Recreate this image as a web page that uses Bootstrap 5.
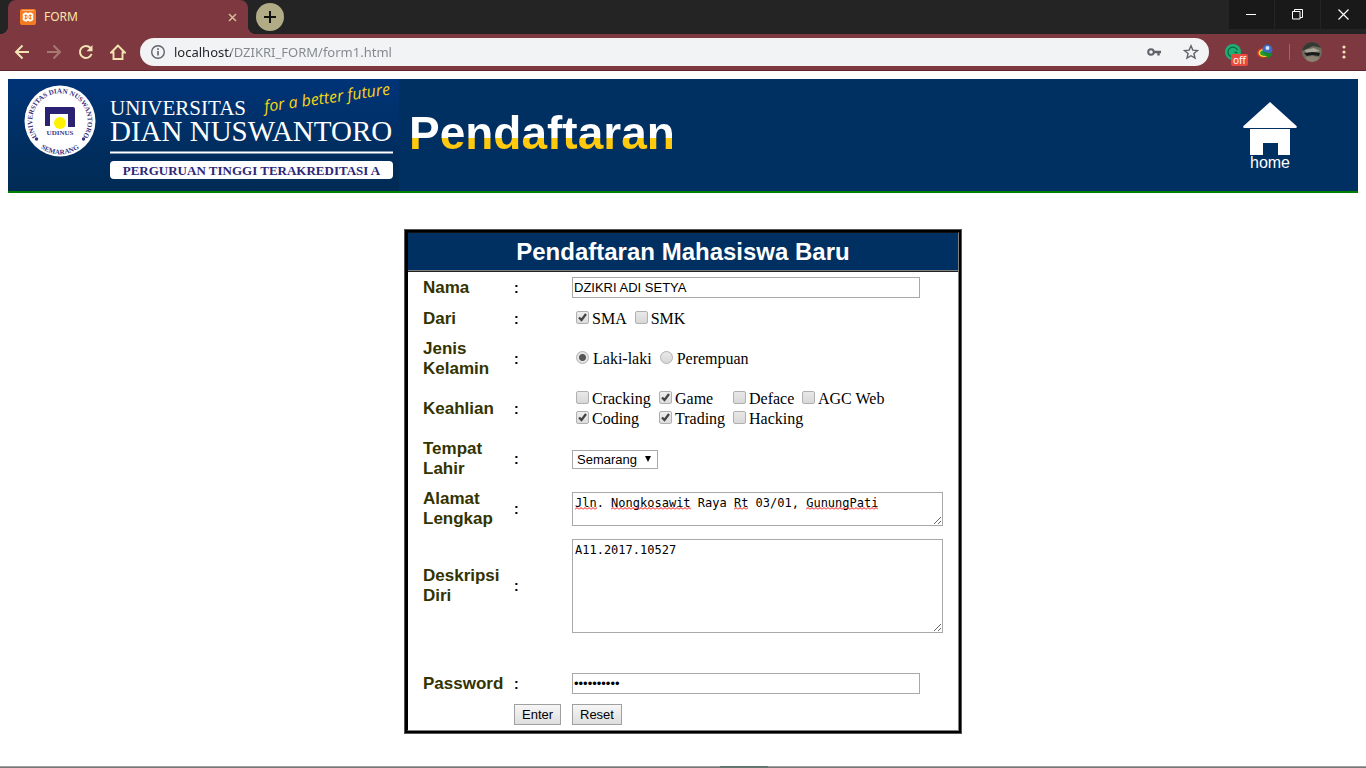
<!DOCTYPE html>
<html lang="id">
<head>
<meta charset="utf-8">
<meta name="viewport" content="width=device-width, initial-scale=1">
<title>FORM</title>
<link href="https://cdn.jsdelivr.net/npm/bootstrap@5.3.0/dist/css/bootstrap.min.css" rel="stylesheet">
<style>
  :root { --wine: #7d3840; --cream: #f3e3b3; --navy: #002f62; }
  body { font: 16px/20px "Liberation Serif", serif; color: #000; background: #fff; }
  svg { display: block; flex: none; }
  button { padding: 0; }

  /* browser frame */
  .frame-ui { font-family: "Noto Sans", sans-serif; }
  .tabstrip { height: 34px; background: #242424; padding-left: 8px; }
  .page-tab { position: relative; width: 240px; padding: 0 11px 0 12px; background: var(--wine); border-radius: 8px 8px 0 0; color: #f9e6a8; font-size: 12px; }
  .page-tab::before, .page-tab::after { content: ""; position: absolute; bottom: 0; width: 8px; height: 8px; }
  .page-tab::before { right: 100%; background: radial-gradient(circle at 0 0, transparent 8px, var(--wine) 8px); }
  .page-tab::after { left: 100%; background: radial-gradient(circle at 100% 0, transparent 8px, var(--wine) 8px); }
  .plain-btn { border: 0; background: none; display: flex; align-items: center; justify-content: center; }
  .new-tab { width: 28px; height: 28px; border-radius: 50%; background: #b1ac85; margin: 3px 0 0 8px; }
  .win-group { gap: 1px; }
  .win-btn { width: 45px; height: 29px; background: #191919; }
  .toolbar { height: 37px; background: var(--wine); border-bottom: 1px solid #5c2530; padding: 0 20px 0 14px; }
  .omnibox { height: 28px; border-radius: 14px; background: #f1f3f4; padding: 0 10px; margin-left: 14px; }
  .url-input { border: 0; padding: 0; outline: 0; font-size: 13px; line-height: 20px; color: transparent; background: linear-gradient(90deg, #202124 57px, #80868b 57px); -webkit-background-clip: text; background-clip: text; min-width: 0; }
  .key-icon { margin-right: 22px; }
  .off-tag { position: absolute; left: 6px; top: 10px; background: #ea4a3d; color: #fff; border-radius: 2px; font-size: 10px; line-height: 12px; padding: 0 2px; }
  .bar-divider { width: 1px; height: 16px; background: #a2685f; }
  .avatar { margin: 0 20px 0 12px; }

  /* site header */
  .site-head { margin: 8px 8px 0; background: var(--navy); border-bottom: 2px solid #008000; height: 114px; }
  .brand-art { width: 391px; background: linear-gradient(#003478, #002d5c 70%, #002b55); }
  .page-name { font: bold 46px/56px "Liberation Sans", sans-serif; margin: 0 0 4px 10px; color: transparent; background: linear-gradient(#fff 33px, #ffc90e 33px); -webkit-background-clip: text; background-clip: text; }
  .home-link { margin-right: 60px; }

  /* form */
  .form-box { width: 558px; max-width: 100%; margin: 36px auto 32px; background: #000; border: 1px solid #555; padding: 2px; }
  .form-inner { border: 1px solid #808080; border-top-color: #111; border-left-color: #000; background: #fff; }
  .form-title { background: var(--navy); color: #fff; font: bold 24px/37px "Liberation Sans", sans-serif; text-align: center; margin: 0; border-bottom: 1px solid #808080; }
  .form-grid { display: grid; grid-template-columns: 91px 58px 1fr; grid-template-rows: 31px 31px repeat(4, 50px) 104px 61px 31px; align-items: center; border-top: 1px solid #222; padding-left: 15px; padding-right: 15px; }
  .cap { font: bold 17px/20px "Liberation Sans", sans-serif; color: #333300; padding-right: 8px; }
  .sep { font: bold 14px/20px "Liberation Sans", sans-serif; }
  .pw-row { padding-top: 30px; }
  .field { border: 1px solid #a9a9a9; background: #fff; border-radius: 0; color: #000; font: 13px/15px "Liberation Sans", sans-serif; padding: 2px 1px; display: block; }
  .line-field { width: 348px; max-width: 100%; height: 21px; }
  .area-field { width: 100%; padding: 2px; font: 12px/16px "DejaVu Sans Mono", monospace; resize: both; overflow: hidden; }
  .pick-field { appearance: none; height: 19px; width: 86px; padding: 0 4px; background: url("data:image/svg+xml,%3Csvg xmlns='http://www.w3.org/2000/svg' width='6' height='6'%3E%3Cpath d='M0 0h6L3 6z'/%3E%3C/svg%3E") no-repeat right 6px top 5px #fff; }
  .tick { appearance: none; width: 13px; height: 13px; margin: 0 3px 0 0; border: 1px solid #b0b0b0; border-radius: 2px; background: linear-gradient(#e8e8e8, #d8d8d8); flex: none; }
  .tick[type=radio] { border-radius: 50%; margin-right: 4px; }
  .tick[type=checkbox]:checked { background: url("data:image/svg+xml,%3Csvg xmlns='http://www.w3.org/2000/svg' width='11' height='11'%3E%3Cpath d='M2 5.5 4.5 8 9 2' fill='none' stroke='%23444' stroke-width='2.3'/%3E%3C/svg%3E"), linear-gradient(#eee, #ddd); }
  .tick[type=radio]:checked { background: radial-gradient(circle, #555 3px, #e4e4e4 4px); }
  .choices { padding-left: 4px; }
  .choice { display: flex; align-items: center; white-space: nowrap; }
  .choice .tick { margin-bottom: 3px; }
  .skills { display: grid; grid-template-columns: 83px 74px 69px auto; justify-content: start; }
  .spell-line { position: absolute; left: 3px; top: 15px; height: 3px; display: flex; pointer-events: none; font: 12px/16px "DejaVu Sans Mono", monospace; }
  .spell-line span { height: 3px; background: url("data:image/svg+xml,%3Csvg xmlns='http://www.w3.org/2000/svg' width='4' height='3'%3E%3Cpath d='M0 2.5 2 .5 4 2.5' fill='none' stroke='red'/%3E%3C/svg%3E"); }
  .w2 { width: 2ch; margin-left: 6ch; }
  .w3 { width: 3ch; }
  .w10 { width: 10ch; margin-left: 8ch; }
  .w11 { width: 11ch; margin-left: 2ch; }
  #alamat { height: 34px; }
  #desk { height: 94px; }
  .form-btn { height: 21px; border: 1px solid #a0a0a0; background: linear-gradient(#f6f6f6, #dedede); font: 13px/15px "Liberation Sans", sans-serif; padding: 0 7px; color: #000; }
  .os-edge { height: 2px; background: linear-gradient(#a0a0a0 50%, #777 50%); }
  .os-edge div { width: 48px; height: 2px; background: #65756f; margin-left: calc(50% + 37px); }
</style>
</head>
<body class="d-flex flex-column min-vh-100">
<header class="frame-ui">
  <div class="tabstrip d-flex align-items-start">
    <div class="page-tab d-flex align-items-center h-100">
      <svg width="16" height="16" viewBox="0 0 16 16"><rect width="16" height="16" rx="2" fill="#f47b20"/><path d="M2 1.500h12" stroke="#fbb477"/><path d="M5.500 4.500h1L8 6l1.500-1.500h1c2 0 2.700 2 1.200 3.500 1.500 1.500.8 3.500-1.200 3.500h-1L8 10l-1.500 1.500h-1C3.500 11.500 2.800 9.500 4.300 8 2.800 6.500 3.500 4.500 5.500 4.500z" fill="none" stroke="#fff" stroke-width="1.900"/><path d="M6 8h4" stroke="#fff" stroke-width="1.200"/></svg>
      <span class="ms-2">FORM</span>
      <button class="plain-btn ms-auto" aria-label="Tutup tab"><svg width="9" height="9" viewBox="0 0 9 9"><path d="M1 1l7 7M8 1 1 8" stroke="#d5bd98" stroke-width="1.500"/></svg></button>
    </div>
    <button class="plain-btn new-tab" aria-label="Tab baru"><svg width="12" height="12" viewBox="0 0 12 12"><path d="M6 0v12M0 6h12" stroke="#111" stroke-width="2"/></svg></button>
    <div class="win-group d-flex ms-auto">
      <button class="plain-btn win-btn" aria-label="Minimalkan"><svg width="11" height="11"><path d="M0 5.500h10" stroke="#fff"/></svg></button>
      <button class="plain-btn win-btn" aria-label="Pulihkan"><svg width="11" height="11"><path d="M.5 2.500h7.500v7.500h-7.500zM2.500 2.500v-2h8v8H8" fill="none" stroke="#fff"/></svg></button>
      <button class="plain-btn win-btn" aria-label="Tutup"><svg width="11" height="11"><path d="M.5.5l10 10M10.500.5l-10 10" stroke="#fff" stroke-width="1.200"/></svg></button>
    </div>
  </div>
  <div class="toolbar d-flex align-items-center">
    <div class="d-flex gap-3">
      <button class="plain-btn" aria-label="Kembali"><svg width="16" height="16" viewBox="0 0 16 16"><path d="M15 8H2M8.500 1.500 2 8l6.500 6.500" fill="none" stroke="#f3e3b3" stroke-width="2"/></svg></button>
      <button class="plain-btn" aria-label="Maju"><svg width="16" height="16" viewBox="0 0 16 16"><path d="M1 8h13M7.500 1.500 14 8l-6.500 6.500" fill="none" stroke="#a97870" stroke-width="2"/></svg></button>
      <button class="plain-btn" aria-label="Muat ulang"><svg width="16" height="16" viewBox="0 0 16 16"><path d="M13.600 10A6 6 0 1 1 12.500 4" fill="none" stroke="#f3e3b3" stroke-width="2"/><path d="M14.500 1v6.200H8.500z" fill="#f3e3b3"/></svg></button>
      <button class="plain-btn" aria-label="Beranda"><svg width="16" height="16" viewBox="0 0 16 16"><path d="M8 1.500 1.200 8.500H3.500V15h9V8.500h2.300z" fill="none" stroke="#f3e3b3" stroke-width="1.900"/></svg></button>
    </div>
    <div class="omnibox d-flex align-items-center flex-grow-1">
      <svg width="16" height="16" viewBox="0 0 16 16"><circle cx="8" cy="8" r="6.300" fill="none" stroke="#5f6368" stroke-width="1.400"/><path d="M8 7v4.500M8 4.300v1.600" stroke="#5f6368" stroke-width="1.600"/></svg>
      <input class="url-input flex-grow-1 ms-2" type="text" aria-label="Alamat" value="localhost/DZIKRI_FORM/form1.html">
      <svg class="key-icon" width="14" height="14" viewBox="0 0 14 14"><circle cx="4" cy="7" r="2.800" fill="none" stroke="#5f6368" stroke-width="2"/><path d="M7 7h7M11.500 7v3.500" stroke="#5f6368" stroke-width="2.400"/></svg>
      <svg width="16" height="16" viewBox="0 0 16 16"><path d="M8 1.800l1.800 4.300 4.700.4-3.600 3 1.100 4.600L8 11.700l-4 2.400 1.100-4.600-3.600-3 4.700-.4z" fill="none" stroke="#5f6368" stroke-width="1.400"/></svg>
    </div>
    <div class="d-flex align-items-center gap-3 ms-3">
      <div class="position-relative">
        <svg width="16" height="16" viewBox="0 0 16 16"><circle cx="8" cy="8" r="8" fill="#1fae73"/><path d="M12 11A5 5 0 1 1 12.500 6M12.500 8.500H9.500" fill="none" stroke="#0c6848" stroke-width="1.300"/></svg>
        <span class="off-tag">off</span>
      </div>
      <svg width="16" height="16" viewBox="0 0 16 16"><ellipse cx="6" cy="9" rx="6" ry="5" fill="#d33b22"/><ellipse cx="7" cy="9" rx="5.500" ry="4" fill="#f4d821"/><ellipse cx="8" cy="9" rx="5" ry="3" fill="#229a35"/><circle cx="10.500" cy="5.500" r="5" fill="#3e6bc2"/><circle cx="10.500" cy="4" r="2" fill="#d6e4f5"/><path d="M6 7.500 16 10l-5.500 5-1-3z" fill="#178b22"/></svg>
      <div class="bar-divider"></div>
    </div>
    <svg class="avatar" width="20" height="20" viewBox="0 0 20 20"><clipPath id="av"><circle cx="10" cy="10" r="10"/></clipPath><g clip-path="url(#av)"><path fill="#6e6d5f" d="M0 0h20v20H0z"/><path fill="#343933" d="M0 0h20v6L11 4 0 9z"/><path fill="#aaa79a" d="M3 8l9-2 6 3-5 1-9 1z"/><path fill="#17191a" d="M2 11l9-1 7 1-1 3-7-1-5 1z"/><path fill="#8d8272" d="M3 15l8-1 7 2-4 4H6z"/></g></svg>
    <button class="plain-btn" aria-label="Menu"><svg width="4" height="14" viewBox="0 0 4 14"><g fill="#f3e3b3"><circle cx="2" cy="2" r="1.600"/><circle cx="2" cy="7" r="1.600"/><circle cx="2" cy="12" r="1.600"/></g></svg></button>
  </div>
</header>

<div class="site-head d-flex align-items-center">
  <div class="brand-art h-100">
    <svg width="391" height="112" viewBox="0 0 391 112" font-family="Liberation Serif, serif">
      <circle cx="52" cy="42" r="35.500" fill="#fff"/>
      <path id="ringTop" d="M28.700 57A27.700 27.700 0 1 1 75.300 57" fill="none"/>
      <path id="ringLow" d="M29 66A33 33 0 0 0 75 66" fill="none"/>
      <g fill="#3a3580" font-weight="bold" font-size="7">
        <text text-anchor="middle"><textPath href="#ringTop" startOffset="50%">UNIVERSITAS DIAN NUSWANTORO</textPath></text>
        <text text-anchor="middle"><textPath href="#ringLow" startOffset="50%">SEMARANG</textPath></text>
        <text x="52" y="56" text-anchor="middle">UDINUS</text>
        <circle cx="28.500" cy="60" r="1.700"/><circle cx="75.500" cy="60" r="1.700"/>
      </g>
      <path d="M37 28h28q2 0 2 2v18h-7V35H42v12h-5z" fill="#2b2173"/>
      <circle cx="52" cy="44" r="6" fill="#fff200"/>
      <text x="102" y="36" font-size="21" fill="#fff">UNIVERSITAS</text>
      <text x="102" y="62" font-size="29" fill="#fff">DIAN NUSWANTORO</text>
      <text x="257" y="33" font-size="16" font-style="italic" fill="#f9d616" font-family="Open Sans, sans-serif" transform="rotate(-8 257 33)">for a better future</text>
      <path d="M102 73.500h283" stroke="#fff" stroke-width="2"/>
      <rect x="102" y="82" width="283" height="18" rx="4" fill="#fff"/>
      <text x="243.500" y="96" font-size="13" font-weight="bold" text-anchor="middle" fill="#2e2677">PERGURUAN TINGGI TERAKREDITASI A</text>
    </svg>
  </div>
  <h1 class="page-name">Pendaftaran</h1>
  <a href="#" class="home-link ms-auto">
    <svg width="56" height="68" viewBox="0 0 56 68"><path d="M28 1 54.500 25q1 2-1 2h-51q-2 0-1-2z" fill="#fff"/><path d="M8 28h40v26H36V42H21v12H8z" fill="#fff"/><text x="28" y="67" text-anchor="middle" font-size="16" fill="#fff" font-family="Liberation Sans, sans-serif">home</text></svg>
  </a>
</div>

<main>
  <form class="form-box" onsubmit="return false">
    <div class="form-inner">
      <h2 class="form-title">Pendaftaran Mahasiswa Baru</h2>
      <div class="form-grid">
        <label class="cap" for="nama">Nama</label><span class="sep">:</span>
        <input class="field line-field" id="nama" type="text" value="DZIKRI ADI SETYA">

        <span class="cap">Dari</span><span class="sep">:</span>
        <div class="choices d-flex gap-2">
          <label class="choice"><input class="tick" type="checkbox" checked>SMA</label>
          <label class="choice"><input class="tick" type="checkbox">SMK</label>
        </div>

        <span class="cap">Jenis Kelamin</span><span class="sep">:</span>
        <div class="choices d-flex gap-2">
          <label class="choice"><input class="tick" type="radio" name="jk" checked>Laki-laki</label>
          <label class="choice"><input class="tick" type="radio" name="jk">Perempuan</label>
        </div>

        <span class="cap">Keahlian</span><span class="sep">:</span>
        <div class="choices skills">
          <label class="choice"><input class="tick" type="checkbox">Cracking</label>
          <label class="choice"><input class="tick" type="checkbox" checked>Game</label>
          <label class="choice"><input class="tick" type="checkbox">Deface</label>
          <label class="choice"><input class="tick" type="checkbox">AGC Web</label>
          <label class="choice"><input class="tick" type="checkbox" checked>Coding</label>
          <label class="choice"><input class="tick" type="checkbox" checked>Trading</label>
          <label class="choice"><input class="tick" type="checkbox">Hacking</label>
        </div>

        <label class="cap" for="lahir">Tempat Lahir</label><span class="sep">:</span>
        <select class="field pick-field" id="lahir"><option>Semarang</option></select>

        <label class="cap" for="alamat">Alamat Lengkap</label><span class="sep">:</span>
        <div class="position-relative">
          <textarea class="field area-field" id="alamat" spellcheck="false">Jln. Nongkosawit Raya Rt 03/01, GunungPati</textarea>
          <div class="spell-line" aria-hidden="true"><span class="w3"></span><span class="w11"></span><span class="w2"></span><span class="w10"></span></div>
        </div>

        <label class="cap" for="desk">Deskripsi Diri</label><span class="sep">:</span>
        <textarea class="field area-field" id="desk" spellcheck="false">A11.2017.10527</textarea>

        <label class="cap pw-row pe-0" for="sandi">Password</label><span class="sep pw-row">:</span>
        <div class="pw-row"><input class="field line-field" id="sandi" type="password" value="abcdefghij"></div>

        <span></span>
        <div><button class="form-btn" type="submit">Enter</button></div>
        <div><button class="form-btn" type="reset">Reset</button></div>
      </div>
    </div>
  </form>
</main>
<footer class="os-edge mt-auto"><div></div></footer>
<script src="https://cdn.jsdelivr.net/npm/bootstrap@5.3.0/dist/js/bootstrap.bundle.min.js"></script>
</body>
</html>
